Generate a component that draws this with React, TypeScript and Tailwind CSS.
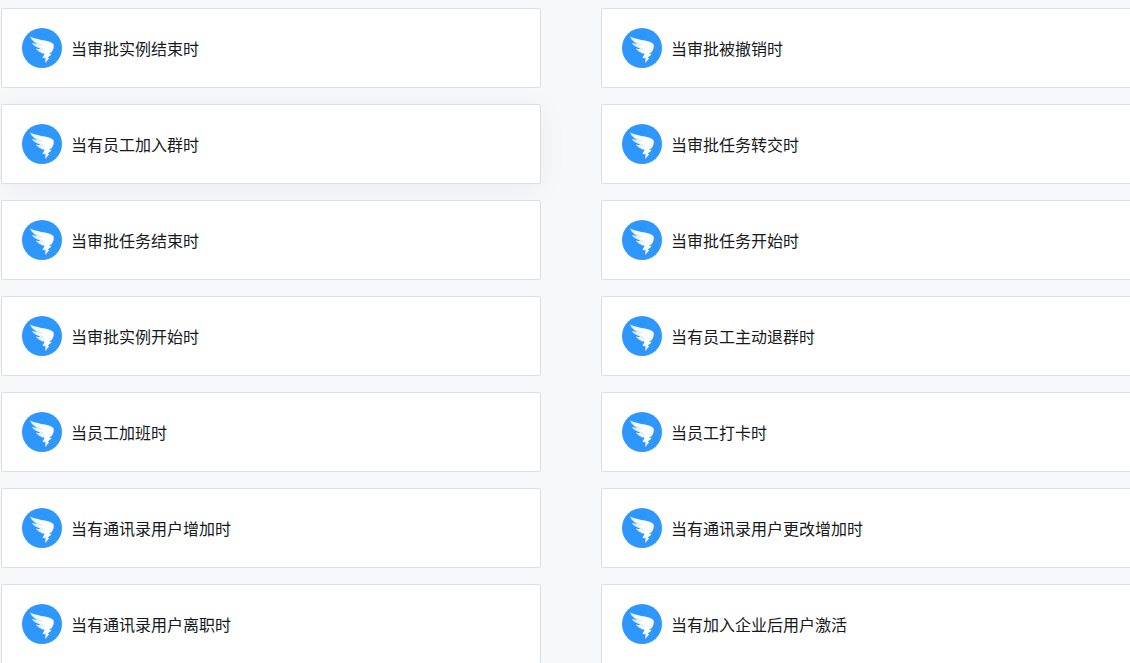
const triggers: string[] = [
  '当审批实例结束时',
  '当审批被撤销时',
  '当有员工加入群时',
  '当审批任务转交时',
  '当审批任务结束时',
  '当审批任务开始时',
  '当审批实例开始时',
  '当有员工主动退群时',
  '当员工加班时',
  '当员工打卡时',
  '当有通讯录用户增加时',
  '当有通讯录用户更改增加时',
  '当有通讯录用户离职时',
  '当有加入企业后用户激活',
];

function DingIcon() {
  return (
    <svg width="40" height="40" viewBox="0 0 40 40" className="shrink-0">
      <defs>
        <linearGradient id="wing" x1="1" y1="0.25" x2="0.15" y2="0.75">
          <stop offset="0.5" stopColor="#ffffff" />
          <stop offset="1" stopColor="#a9d3ff" />
        </linearGradient>
      </defs>
      <circle cx="20" cy="20" r="20" fill="#2e96fd" />
      <path
        d="M8 8.5C13 11 18 11.6 23 12.6C27 13.4 30 14.6 31.6 16.4C32.4 19 31 22.8 28.6 25.2L26.6 25.4L29.6 26.4L25.6 29.6L27.2 30.2L23 35.2L23.6 30.4L20.4 29.8L22.6 25.8C19 25.2 15.8 23.2 13.6 20.4C15.5 21 17.2 21 18.4 20.6C14.5 19.6 11 17.6 9.8 14.8C11.5 15.4 13.5 15.8 15 15.6C11.5 14 9 11.5 8 8.5Z"
        fill="url(#wing)"
      />
      <path d="M15 15.6C16.8 16.3 18.2 16.7 19.8 16.8M18.4 20.6C19.6 21.1 20.8 21.3 22 21.3" fill="none" stroke="#b5d9ff" strokeWidth="0.7" />
    </svg>
  );
}

export default function App() {
  return (
    <div className="h-[663px] w-[1130px] overflow-hidden bg-[#f7f8fa] pl-px pt-2 font-['Noto_Sans_CJK_SC',sans-serif]">
      <div className="grid w-[1140px] grid-cols-[540px_540px] gap-x-[60px] gap-y-4">
        {triggers.map((name, i) => (
          <div
            key={name}
            className={`flex h-20 items-center gap-[9px] rounded-[2px] border border-[#dcdee2] bg-white px-5 ${
              i === 2 ? 'shadow-[0_4px_30px_0_rgba(0,0,0,0.05)]' : ''
            }`}
          >
            <DingIcon />
            <span className="text-base text-[#17191c]">{name}</span>
          </div>
        ))}
      </div>
    </div>
  );
}
